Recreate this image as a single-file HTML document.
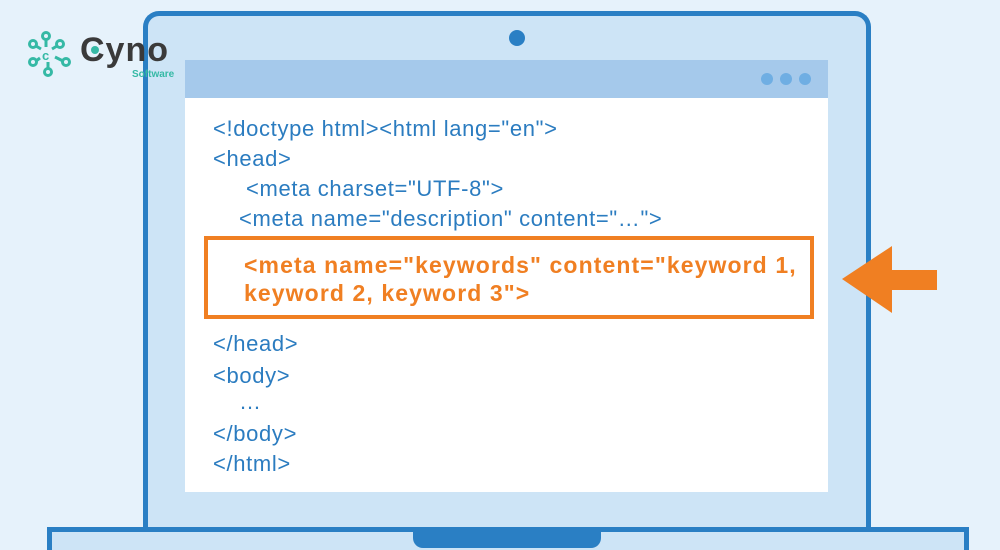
<!DOCTYPE html>
<html style="width:1000px;height:550px;overflow:hidden"><head><meta charset="utf-8"><style>
*{margin:0;padding:0;box-sizing:border-box}
body{width:1000px;height:550px;overflow:hidden;background:#e6f2fb;position:relative;font-family:"Liberation Sans",sans-serif}
.abs{position:absolute}
.frame{left:143px;top:11px;width:728px;height:530px;border:5px solid #2a7fc4;border-bottom:none;border-radius:16px 16px 0 0;background:#cde4f6}
.bar{left:185px;top:60px;width:643px;height:38px;background:#a5c9eb}
.scr{left:185px;top:98px;width:643px;height:394px;background:#fff}
.dot{top:73px;width:12px;height:12px;border-radius:50%;background:#6faee3}
.l{position:absolute;color:#2b7cc0;font-size:22px;letter-spacing:0.65px;white-space:nowrap;line-height:24px}
.o{position:absolute;color:#f07f22;font-size:23px;letter-spacing:1.1px;font-weight:bold;white-space:nowrap;line-height:24px}
.box{left:204px;top:236px;width:610px;height:83px;border:4px solid #f07f22}
.base{left:47px;top:527px;width:922px;height:23px;border:5px solid #2a7fc4;border-bottom:none;background:#cde4f6}
.notch{left:413px;top:527px;width:188px;height:21px;background:#2a7fc4;border-radius:0 0 10px 10px}
</style></head><body>
<div class="abs frame"></div>
<div class="abs" style="left:509px;top:30px;width:16px;height:16px;border-radius:50%;background:#2a7fc4"></div>
<div class="abs bar"></div>
<div class="abs dot" style="left:761px"></div>
<div class="abs dot" style="left:780px"></div>
<div class="abs dot" style="left:799px"></div>
<div class="abs scr"></div>
<div class="l" style="left:213px;top:117px">&lt;!doctype html&gt;&lt;html lang="en"&gt;</div>
<div class="l" style="left:213px;top:147px">&lt;head&gt;</div>
<div class="l" style="left:246px;top:177px">&lt;meta charset="UTF-8"&gt;</div>
<div class="l" style="left:239px;top:207px">&lt;meta name="description" content="…"&gt;</div>
<div class="abs box"></div>
<div class="o" style="left:244px;top:253px">&lt;meta name="keywords" content="keyword 1,</div>
<div class="o" style="left:244px;top:281px">keyword 2, keyword 3"&gt;</div>
<div class="l" style="left:213px;top:332px">&lt;/head&gt;</div>
<div class="l" style="left:213px;top:364px">&lt;body&gt;</div>
<div class="l" style="left:239px;top:390px">…</div>
<div class="l" style="left:213px;top:422px">&lt;/body&gt;</div>
<div class="l" style="left:213px;top:452px">&lt;/html&gt;</div>
<svg class="abs" style="left:835px;top:240px" width="110" height="80"><polygon points="7,39 57,6 57,30 102,30 102,50 57,50 57,73" fill="#f07f22"/></svg>
<div class="abs base"></div>
<div class="abs notch"></div>
<svg class="abs" style="left:26px;top:30px" width="50" height="52" fill="none" stroke="#35b9a5" stroke-width="3">
<circle cx="20" cy="6" r="3.5"/><circle cx="7" cy="14" r="3.5"/><circle cx="34" cy="14" r="3.5"/>
<circle cx="7" cy="32" r="3.5"/><circle cx="40" cy="32" r="3.5"/><circle cx="22" cy="42" r="3.5"/>
<path d="M20 10V17M10 16L15 19M31 16L26 19M10 31L14 28M37 31L29 27M22 38V32"/>
<text x="16" y="30" font-size="13" font-weight="bold" fill="#35b9a5" stroke="none" font-family="Liberation Sans">c</text>
</svg>
<div class="abs" style="left:80px;top:32px;font-size:34px;font-weight:bold;color:#3a3a3a;line-height:36px;letter-spacing:1px">Cyno</div>
<div class="abs" style="left:91px;top:46px;width:8px;height:8px;border-radius:50%;background:#35b9a5"></div>
<div class="abs" style="left:132px;top:69px;font-size:10px;font-weight:bold;color:#35b9a5">Software</div>
</body></html>
